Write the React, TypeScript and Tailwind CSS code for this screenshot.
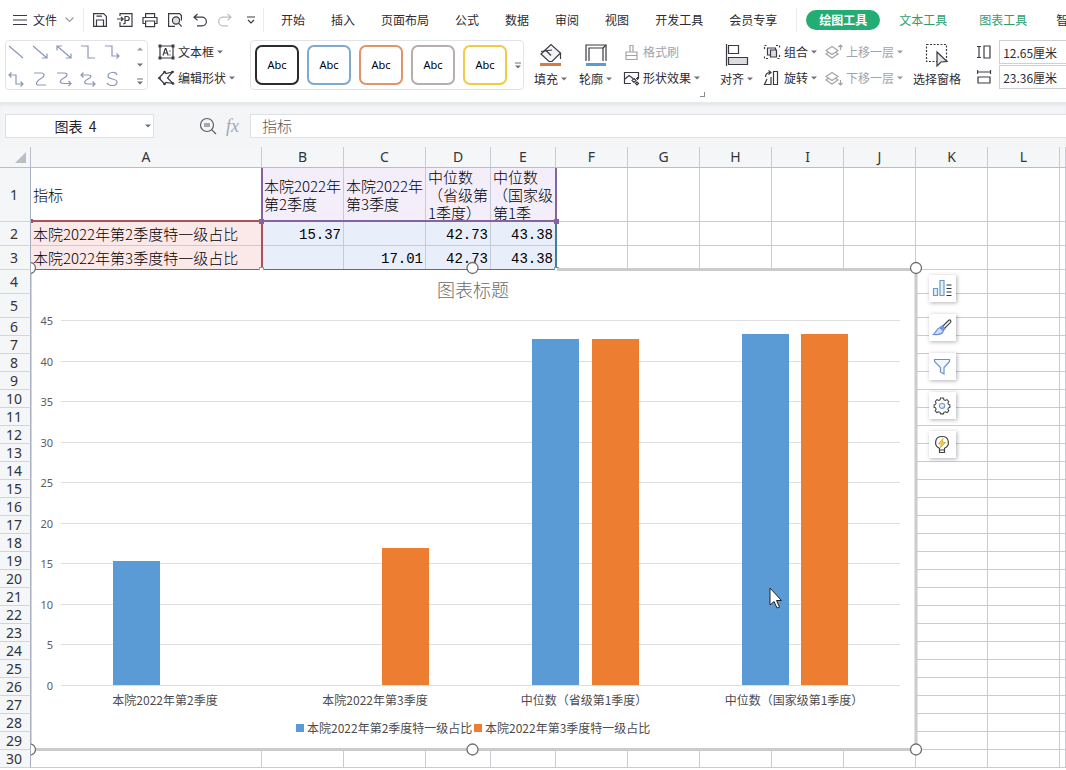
import React from "react";

const INK = "#3a3a44";

function Svg({ w, h, children, className = "", color = INK }: { w: number; h: number; children: React.ReactNode; className?: string; color?: string }) {
  return (
    <svg width={w} height={h} viewBox={`0 0 ${w} ${h}`} fill="none" stroke={color} strokeWidth="1.2" className={`shrink-0 ${className}`} aria-hidden="true">
      {children}
    </svg>
  );
}

function Caret({ muted = false }: { muted?: boolean }) {
  return (
    <svg width="6" height="4" viewBox="0 0 6 4" className="shrink-0" aria-hidden="true">
      <path d="M0 0.5h6L3 3.5z" fill={muted ? "#9a9aa0" : "#70707a"} />
    </svg>
  );
}

function MoreCaret() {
  return (
    <svg width="6" height="7" viewBox="0 0 6 7" className="shrink-0" aria-hidden="true">
      <path d="M0 1h6" stroke="#70707a" />
      <path d="M0 3.5h6L3 6.5z" fill="#70707a" />
    </svg>
  );
}

const quickIcons = [
  {
    label: "保存",
    art: <><path d="M1.6 1.6h10l2.8 2.8v10H1.6z" /><path d="M4.5 14V8h7v6M4.5 4.2h5.5" /></>,
  },
  {
    label: "输出为PDF",
    art: <><path d="M3 4V1.6h12v12.8H3V10" /><path d="M0 7h6M4 5l2.200 2L4 9" /><path d="M8 12V4.500h2.200a2 2 0 0 1 0 4H8M6 12c1 0 2 0 2-1.500" /></>,
  },
  {
    label: "打印",
    art: <><path d="M3.6 5.5V1.6h9v3.9M3.6 11.5H1V5.5h14v6h-2.4" /><path d="M3.6 9h9v5.6h-9z" /></>,
  },
  {
    label: "打印预览",
    art: <><path d="M8 14.4H1.6V1.6h11l1.8 2v5" /><circle cx="9" cy="8.5" r="3.6" fill="#dcdce0" /><path d="M11.5 11.2l3.2 3.4" /></>,
  },
  { label: "撤销", art: <path d="M5.5 2L2 5.2l3.5 3.2M2.2 5.2H10a4.3 4.3 0 0 1 0 8.7H5" /> },
  { label: "恢复", muted: true, art: <path d="M10.5 2L14 5.2l-3.5 3.2M13.8 5.2H6a4.3 4.3 0 0 0 0 8.7h5" /> },
];

const tabs = ["开始", "插入", "页面布局", "公式", "数据", "审阅", "视图", "开发工具", "会员专享"];

function MenuBar() {
  return (
    <nav className="flex h-[39px] items-center overflow-hidden whitespace-nowrap pl-[13px]">
      <button className="flex items-center">
        <Svg w={14} h={12}><path d="M0 1.5h14M0 6h14M0 10.5h14" /></Svg>
        <span className="ml-[6px]">文件</span>
        <Svg w={9} h={6} className="ml-2" color="#9a9aa0"><path d="M0.5 0.5l4 4 4-4" /></Svg>
      </button>
      <span className="ml-[9px] h-6 w-px shrink-0 bg-[#ececef]" />
      <div className="ml-2 flex items-center gap-[9px]">
        {quickIcons.map((q) => (
          <button key={q.label} aria-label={q.label}>
            <Svg w={16} h={16} color={q.muted ? "#bdbdc4" : INK}>{q.art}</Svg>
          </button>
        ))}
      </div>
      <button aria-label="自定义快速访问" className="ml-[14px]">
        <Svg w={8} h={8}><path d="M0 1h8M1 4l3 3 3-3" /></Svg>
      </button>
      <span className="ml-[8px] h-6 w-px shrink-0 bg-[#ececef]" />
      <div className="ml-[17px] flex gap-[26px]">
        {tabs.map((t) => <button key={t}>{t}</button>)}
      </div>
      <span className="ml-[19px] h-6 w-px shrink-0 bg-[#ececef]" />
      <button className="ml-[9px] h-5 shrink-0 rounded-full bg-[#22ad74] px-[13px] font-bold text-white">绘图工具</button>
      <button className="ml-[19px] text-[#2f9e6f]">文本工具</button>
      <button className="ml-8 text-[#2f9e6f]">图表工具</button>
      <button className="ml-[29px]">智</button>
    </nav>
  );
}

const connectorShapes = [
  <path d="M1 2l14 12" />,
  <path d="M1 2l14 12M15 9.5V14h-5" />,
  <path d="M1 2l14 12M15 9.5V14h-5M1 6.5V2h5" />,
  <path d="M1 2h7v12h7" />,
  <path d="M1 2h7v10h7M12.5 9.5L15 12l-2.500 2.500" />,
  <path d="M1 4h7v9h7M3.500 1.500L1 4l2.500 2.500M12.500 10.500L15 13l-2.500 2.500" />,
  <path d="M2 2h7c4 0 4 3.500 0 5.500S2 14 7 14h7" />,
  <path d="M1 2h7c4 0 4 3 0 5s-6 5 0 5.500h7M12.500 10l2.500 2.500-2.500 2.500" />,
  <path d="M1 4h7c4 0 4 2 0 4s-5 4.500 0 5h7M3.500 1.500L1 4l2.500 2.500M12.500 10.500L15 13l-2.500 2.500" />,
  <path d="M13 4C12 0 4 1 4 5c0 4 9 2 9 6 0 4.500-8 4.500-10 1" />,
];

function ShapeGallery() {
  return (
    <div className="flex h-[50px] w-[143px] rounded-sm border border-[#e2e3e8]">
      <div className="grid w-[122px] shrink-0 grid-cols-5 gap-y-2 pl-[2px] pt-[3px]">
        {connectorShapes.map((s, i) => (
          <button key={i} aria-label={`线条 ${i + 1}`} className="h-4 w-4">
            <Svg w={16} h={16} color="#8b98ba">{s}</Svg>
          </button>
        ))}
      </div>
      <div className="flex flex-1 flex-col items-center justify-between pb-1 pl-1 pt-[6px]">
        <svg width="6" height="4" viewBox="0 0 6 4" aria-hidden="true"><path d="M0 3.500h6L3 0.500z" fill="#9a9aa0" /></svg>
        <Caret />
        <MoreCaret />
      </div>
    </div>
  );
}

function RibbonRow({ icon, label, caret = true, muted = false }: { icon: React.ReactNode; label: string; caret?: boolean; muted?: boolean }) {
  return (
    <button className={`flex h-[26px] items-center gap-[3px] ${muted ? "text-[#a3a3a8]" : ""}`}>
      {icon}
      <span>{label}</span>
      {caret && <Caret muted={muted} />}
    </button>
  );
}

function BigButton({ icon, label, caret = true }: { icon: React.ReactNode; label: string; caret?: boolean }) {
  return (
    <button className="flex h-[52px] shrink-0 flex-col items-center gap-[2px] pt-1">
      {icon}
      <span className="flex h-5 items-center gap-[3px]">{label}{caret && <Caret />}</span>
    </button>
  );
}

const styleBoxes = ["border-[#2b2b2e]", "border-[#7fa9cf]", "border-[#e09468]", "border-[#b5adb0]", "border-[#f0cb45]"];

const layers = <><path d="M7 2.500L1 6.500 7 10.500l6-4z" /><path d="M3.500 8.200L1 10l6 4 6-4-2.500-1.800" /></>;

function Ribbon() {
  return (
    <div className="flex h-16 items-start overflow-hidden whitespace-nowrap border-b border-[#e6e8eb] pl-[5px]">
      <div className="shrink-0 pt-px"><ShapeGallery /></div>
      <div className="ml-[10px] shrink-0">
        <RibbonRow label="文本框" icon={
          <Svg w={17} h={16}><path d="M2 2h13v12H2z" /><path d="M5 11.500l2.300-7h.6l2.300 7M6 9h3.200M12 6.500v1M12 10.500v1" /><g fill={INK} stroke="none"><path d="M0.500 0.500h3v3h-3zM13.500 0.500h3v3h-3zM0.500 12.500h3v3h-3zM13.500 12.500h3v3h-3z" /></g></Svg>} />
        <RibbonRow label="编辑形状" icon={
          <Svg w={17} h={16}><path d="M6.500 2L1 8l5.500 6M6.500 2L8 3.500 14.500 2 9.500 8l5.500 5.500L8 12.500 6.500 14" /><g fill={INK} stroke="none"><circle cx="6.500" cy="2" r="1.300" /><circle cx="1.500" cy="8" r="1.300" /><circle cx="6.500" cy="14" r="1.300" /><circle cx="15" cy="13.500" r="1.300" /><circle cx="14.500" cy="2" r="1.300" /></g></Svg>} />
      </div>
      <div className="ml-[15px] shrink-0 pt-px">
        <div className="flex h-[50px] w-[274px] items-center gap-2 rounded-sm border border-[#e2e3e8] pl-1">
          {styleBoxes.map((c) => (
            <button key={c} className={`h-10 w-11 shrink-0 rounded-[7px] border-2 bg-white font-['Noto_Sans'] text-[11px] text-black ${c}`}>Abc</button>
          ))}
          <button aria-label="更多样式" className="shrink-0"><MoreCaret /></button>
        </div>
      </div>
      <div className="ml-[10px] flex shrink-0 gap-3">
        <BigButton label="填充" icon={
          <Svg w={24} h={24}><path d="M2 11L12 1.500l9.500 8.500L13 18.500H10z" fill="#f4f4f7" /><path d="M6 6.500l6 6M2 8.500l11-1.500M21.500 10v6" /><path d="M1 21.500h21" stroke="#d97b3f" strokeWidth="3" /></Svg>} />
        <BigButton label="轮廓" icon={
          <Svg w={24} h={24}><path d="M2 18V2h20v16M5 18V5h14v13" /><path d="M22 2l-3 3" /><path d="M2 21.500h20" stroke="#5b9bd5" strokeWidth="3" /></Svg>} />
      </div>
      <div className="ml-[11px] shrink-0">
        <RibbonRow muted caret={false} label="格式刷" icon={
          <Svg w={17} h={16} color="#a3a3a8"><path d="M3 8h11v7.500H3zM3 11.500h11M7 8V1.500h3V8" /></Svg>} />
        <RibbonRow label="形状效果" icon={
          <Svg w={17} h={16}><path d="M8 13.500H1.500v-11h14V8" /><path d="M2 9l4-3.500 4 3" /><path d="M11 8.500l2 2-2 2-2-2zM14.500 7v3M13 8.500h3M14 12l1.500 1.500L14 15l-1.500-1.500z" /></Svg>} />
      </div>
      <div className="mt-[53px] h-[5px] w-[5px] shrink-0 border-b border-r border-[#8b8b92]" />
      <div className="ml-[15px] shrink-0">
        <BigButton label="对齐" icon={
          <Svg w={24} h={24}><path d="M1.500 1v22M3.500 2.500h10v8h-10z" /><path d="M3.500 14.500h19v7h-19z" fill="#dcdce2" /></Svg>} />
      </div>
      <div className="ml-[10px] shrink-0">
        <RibbonRow label="组合" icon={
          <Svg w={18} h={16}><path d="M4.500 4h8v7h-8z" fill="#f2f2f5" /><path d="M7.500 6h6v7h-6z" fill="#dcdce2" /><path d="M1.500 5V1.500H5M13 1.500h3.500V5M16.500 11v3.500H13M5 14.500H1.500V11" strokeDasharray="2 1.500" /></Svg>} />
        <RibbonRow label="旋转" icon={
          <Svg w={18} h={16}><path d="M10.500 1.500h4v13h-4z" /><path d="M8 7v7.500H1.500L4 9M2.500 7c0-3 1.500-4.500 5-4.500M5.500 0.500l2.500 2-2.500 2" /></Svg>} />
      </div>
      <div className="ml-2 shrink-0">
        <RibbonRow muted label="上移一层" icon={
          <Svg w={18} h={16} color="#a3a3a8">{layers}<path d="M15.500 6V1M13.500 3l2-2 2 2" /></Svg>} />
        <RibbonRow muted label="下移一层" icon={
          <Svg w={18} h={16} color="#a3a3a8">{layers}<path d="M15.500 10v5M13.500 13l2 2 2-2" /></Svg>} />
      </div>
      <div className="ml-[10px] shrink-0">
        <BigButton caret={false} label="选择窗格" icon={
          <Svg w={24} h={24}><path d="M1.500 1.500h20v17h-20z" strokeDasharray="2 1.500" /><path d="M12 9v14l4-4 6-.5z" fill="#e6e6ea" /></Svg>} />
      </div>
      <div className="ml-4 min-w-[80px] flex-1">
        <label className="flex h-[25px] items-center pt-px">
          <Svg w={15} h={14}><path d="M0 1.500h4M2 1.500v11M0 12.500h4M7 1h6v12H7z" /></Svg>
          <input aria-label="高度" defaultValue="12.65厘米" className="ml-[7px] h-6 min-w-0 flex-1 border border-r-0 border-[#cfd0d6] pl-[3px]" />
        </label>
        <label className="flex h-[25px] items-center pt-px">
          <Svg w={15} h={14}><path d="M0.500 0v4M0.500 2h13M13.500 0v4M1 7h12v6H1z" /></Svg>
          <input aria-label="宽度" defaultValue="23.36厘米" className="ml-[7px] h-6 min-w-0 flex-1 border border-r-0 border-[#cfd0d6] pl-[3px]" />
        </label>
      </div>
    </div>
  );
}

function FormulaBar() {
  return (
    <div className="flex items-center bg-[#f4f5f7] pb-[9px] pl-[5px] pt-[11px] shadow-[inset_0_3px_3px_-1px_#e3e5e9]">
      <div className="flex h-6 w-[149px] shrink-0 items-center border border-[#dfe1e6] bg-white pr-[2px]">
        <input aria-label="名称框" defaultValue="图表  4" className="min-w-0 flex-1 bg-transparent text-center text-sm text-[#26262b]" />
        <Caret />
      </div>
      <Svg w={18} h={18} className="ml-[45px]" color="#5c5c66"><circle cx="8" cy="8" r="6.500" /><path d="M12.800 12.800L17 17M5 7h6M5 9h6" /></Svg>
      <span className="ml-[9px] w-[14px] font-['Liberation_Serif'] text-[18px] italic leading-5 text-[#a6a6ad]">fx</span>
      <input aria-label="编辑栏" defaultValue="指标" className="ml-[10px] h-6 min-w-0 flex-1 border border-r-0 border-[#dfe1e6] bg-white pb-[2px] pl-[11px] text-[15px] font-light text-[#55555c]" />
    </div>
  );
}

const columns = ["A", "B", "C", "D", "E", "F", "G", "H", "I", "J", "K", "L", "M"];
const columnWidths = ["w-[231px]", "w-[82px]", "w-[82px]", "w-[65px]", "w-[65px]", "w-[72px]", "w-[72px]", "w-[72px]", "w-[72px]", "w-[72px]", "w-[72px]", "w-[72px]", "w-auto"];

const cells: Record<string, string> = {
  A1: "指标",
  B1: "本院2022年\n第2季度",
  C1: "本院2022年\n第3季度",
  D1: "中位数\n（省级第\n1季度）",
  E1: "中位数\n（国家级\n第1季",
  A2: "本院2022年第2季度特一级占比",
  A3: "本院2022年第3季度特一级占比",
  B2: "15.37",
  D2: "42.73",
  E2: "43.38",
  C3: "17.01",
  D3: "42.73",
  E3: "43.38",
};

function cellTint(row: number, col: number) {
  if (row === 1 && col >= 1 && col <= 4) return "bg-[#f4edfa]";
  if ((row === 2 || row === 3) && col === 0) return "bg-[#fbe9ea]";
  if ((row === 2 || row === 3) && col <= 4) return "bg-[#e9eefb]";
  return "bg-white";
}

function Grid() {
  return (
    <table className="w-full min-w-[1066px] table-fixed border-separate border-spacing-0 text-[15px] leading-[18px] text-black">
      <colgroup>
        <col className="w-[31px]" />
        {columnWidths.map((w, i) => <col key={i} className={w} />)}
      </colgroup>
      <thead>
        <tr className="h-[21px]">
          <th className="border-b border-r border-[#b9bccb] bg-[#f4f6f8] p-0">
            <svg width="11" height="11" viewBox="0 0 11 11" className="ml-[15px]" aria-label="全选"><path d="M11 0v11H0z" fill="#bcbec4" /></svg>
          </th>
          {columns.map((c) => (
            <th key={c} className="border-b border-r border-b-[#b9bccb] border-r-[#c8ccd8] bg-[#f4f6f8] p-0 font-['Noto_Sans'] text-sm font-normal leading-5 text-[#33333a]">
              {c === "M" ? "" : c}
            </th>
          ))}
        </tr>
      </thead>
      <tbody>
        {Array.from({ length: 30 }, (_, i) => i + 1).map((r) => (
          <tr key={r} className={r === 1 ? "h-[54px]" : r <= 5 ? "h-6" : "h-[18px]"}>
            <th className="border-b border-r border-b-[#cdd5e0] border-r-[#a9adc0] bg-[#f4f6f8] p-0 pr-[2px] font-['Noto_Sans'] text-sm font-normal leading-[17px] text-[#33333a]">{r}</th>
            {columns.map((c, ci) => {
              const value = cells[`${c}${r}`];
              const numeric = value && r > 1 && ci > 0;
              return (
                <td key={c} className={`border-b border-r border-[#c8cad6] px-[2px] ${cellTint(r, ci)} ${numeric ? "pb-0 pt-[3px] text-right font-['Liberation_Mono'] text-sm leading-5" : "py-0 font-light"}`}>
                  {value && <div className={r === 1 ? "max-h-[53px] whitespace-pre" : "whitespace-pre"}>{value}</div>}
                </td>
              );
            })}
          </tr>
        ))}
      </tbody>
    </table>
  );
}

function RangeOutlines() {
  return (
    <>
      <div className="absolute left-0 top-[52px] h-[50px] w-[232px] border-b border-r-2 border-t-2 border-[#a9525c]" />
      <div className="absolute left-[231px] top-[54px] h-12 w-[295px] border-b border-b-[#5368b4] border-r-2 border-r-[#457d99]" />
      <div className="absolute left-[230px] top-0 h-[54px] w-[296px] border-b-2 border-l-2 border-r-2 border-[#8562a0]" />
      <div className="absolute left-0 top-[51px] h-1 w-[2px] bg-[#a9525c]" />
      <div className="absolute left-[228px] top-[51px] h-[5px] w-[5px] bg-[#8562a0]" />
      <div className="absolute left-[523px] top-[51px] h-[5px] w-[5px] bg-[#8562a0]" />
      <div className="absolute left-[228px] top-[99px] h-1 w-[5px] border border-[#c98a70] bg-white" />
      <div className="absolute left-[523px] top-[99px] h-1 w-[5px] border border-[#5f9db3] bg-white" />
    </>
  );
}

const BLUE = "#5b9bd5";
const ORANGE = "#ed7d31";
const series = [
  { name: "本院2022年第2季度特一级占比", color: BLUE, values: [15.37, null, 42.73, 43.38] },
  { name: "本院2022年第3季度特一级占比", color: ORANGE, values: [null, 17.01, 42.73, 43.38] },
];
const categories = ["本院2022年第2季度", "本院2022年第3季度", "中位数（省级第1季度）", "中位数（国家级第1季度）"];
const BASE = 425;
const UNIT = 365 / 45;
const ticks = [0, 5, 10, 15, 20, 25, 30, 35, 40, 45];

function Chart() {
  return (
    <svg width="894" height="500" viewBox="0 0 894 500" className="absolute left-0 top-[92px]" role="img" aria-label="图表标题">
      <rect x="0" y="10" width="885" height="480" fill="#fff" />
      <path d="M526 9.500H885V489.500H1" fill="none" stroke="#cacbcd" strokeWidth="3" />
      <path d="M0.500 10V490" fill="none" stroke="#d5d6da" />
      <text x="442" y="37" textAnchor="middle" fontSize="18" fontWeight="300" fill="#6b6b6b">图表标题</text>
      {ticks.map((t) => {
        const y = Math.round(BASE - t * UNIT) + 0.5;
        return (
          <g key={t}>
            <path d={`M30 ${y}H869`} stroke="#dedee2" />
            <text x="22" y={y + 4} textAnchor="end" fontSize="11" fill="#5c5c60" fontFamily="'Noto Sans', sans-serif">{t}</text>
          </g>
        );
      })}
      {series.map((s, si) => s.values.map((v, ci) => {
        if (v === null) return null;
        const top = Math.round(BASE - v * UNIT) + 1;
        return <rect key={`${si}-${ci}`} x={Math.round(82 + ci * 209.6 + si * 59.4)} y={top} width="47" height={BASE - top} fill={s.color} />;
      }))}
      {categories.map((c, i) => (
        <text key={c} x={134 + Math.round(i * 209.6)} y="445" textAnchor="middle" fontSize="12" fill="#4c4c50">{c}</text>
      ))}
      {series.map((s, i) => (
        <g key={s.name}>
          <rect x={265 + i * 178} y="464" width="8" height="8" fill={s.color} />
          <text x={276 + i * 178} y="473" fontSize="12" fill="#4c4c50">{s.name}</text>
        </g>
      ))}
      <g fill="#fff" stroke="#6e6e74" strokeWidth="1.300">
        {[8, 489.5].map((y) => [-1, 441.5, 885].map((x) => <circle key={`${x}-${y}`} cx={x} cy={y} r="5.500" />))}
      </g>
      <path d="M739 328v17l4-3.500 3 6.500 2.500-1-3-6.500h5z" fill="#fff" stroke="#222" strokeWidth="1" />
    </svg>
  );
}

const chartTools = [
  {
    label: "图表元素",
    art: <><path d="M1.500 9.500h4v7h-4zM8 1.500h4v15H8z" stroke="#6a9ad0" fill="#e4eff9" /><path d="M14.500 6h5M14.500 9.500h5M14.500 13h5M14.500 16.500h5" stroke="#333" /></>,
  },
  {
    label: "图表样式",
    art: <><path d="M10 9l6.500-6.500c1.500-1.300 3 .2 2 1.800L12 11z" stroke="#444" /><path d="M8 9.500l3.500 3c-1 4-6 4.500-10 4 2.500-1.500 2.500-6 6.500-7z" stroke="#6a8fd8" fill="#cfdcf6" /><path d="M8 9.500L10 8l3 2.500-1.500 2z" stroke="#6a8fd8" fill="#7ea0e0" /></>,
  },
  { label: "图表筛选器", art: <path d="M2.500 2.500h15v2L12 10.500V17l-3.500-2v-4.500l-6-6z" stroke="#6a8fd8" fill="#f2f6fd" /> },
  {
    label: "设置",
    art: <g transform="translate(1.200 0.300) scale(0.880)"><path d="M8.300 2h3.400l.5 2 1.600.7 1.900-1 2 2.200-1 1.800.6 1.500 1.700.6v2.700l-1.700.6-.6 1.600 1 1.800-2 2-1.900-.9-1.600.6-.5 1.800H8.300l-.5-1.800-1.600-.6-1.900.9-2-2 1-1.800-.6-1.600L1 12.500V9.800l1.700-.6.6-1.500-1-1.800 2-2.200 1.900 1L7.800 4z" stroke="#444" /><circle cx="10" cy="10.800" r="3" stroke="#6a9ad0" fill="#dcecf8" /></g>,
  },
  {
    label: "智能推荐",
    art: <g transform="translate(0.500 0)"><path d="M7 15v-1.700C1 10.500 2 1.500 9.500 1.500s8.500 9 2.500 11.800V15zM7 17.500h5V15H7z" stroke="#444" /><path d="M10.500 3.500l-4.500 5.500h3L8 12.500 13 7.500h-3z" fill="#fbd13c" stroke="#d8a520" strokeWidth="0.800" /></g>,
  },
];

function ChartTools() {
  return (
    <div className="absolute left-[898px] top-[107px] flex flex-col gap-3">
      {chartTools.map((t) => (
        <button key={t.label} aria-label={t.label} className="flex h-[27px] w-[27px] items-center justify-center bg-white pr-px shadow-[1px_1px_4px_rgba(60,60,80,0.4)]">
          <Svg w={20} h={20}>{t.art}</Svg>
        </button>
      ))}
    </div>
  );
}

export default function App() {
  return (
    <div className="flex h-screen flex-col overflow-hidden bg-white font-['Noto_Sans_CJK_SC',sans-serif] text-xs text-[#2c2c34]">
      <header className="shrink-0 bg-white">
        <MenuBar />
        <Ribbon />
        <FormulaBar />
      </header>
      <main className="relative min-h-0 flex-1 overflow-hidden">
        <Grid />
        <div className="absolute bottom-0 left-[31px] right-0 top-[21px] overflow-hidden">
          <RangeOutlines />
          <Chart />
          <ChartTools />
        </div>
      </main>
    </div>
  );
}
